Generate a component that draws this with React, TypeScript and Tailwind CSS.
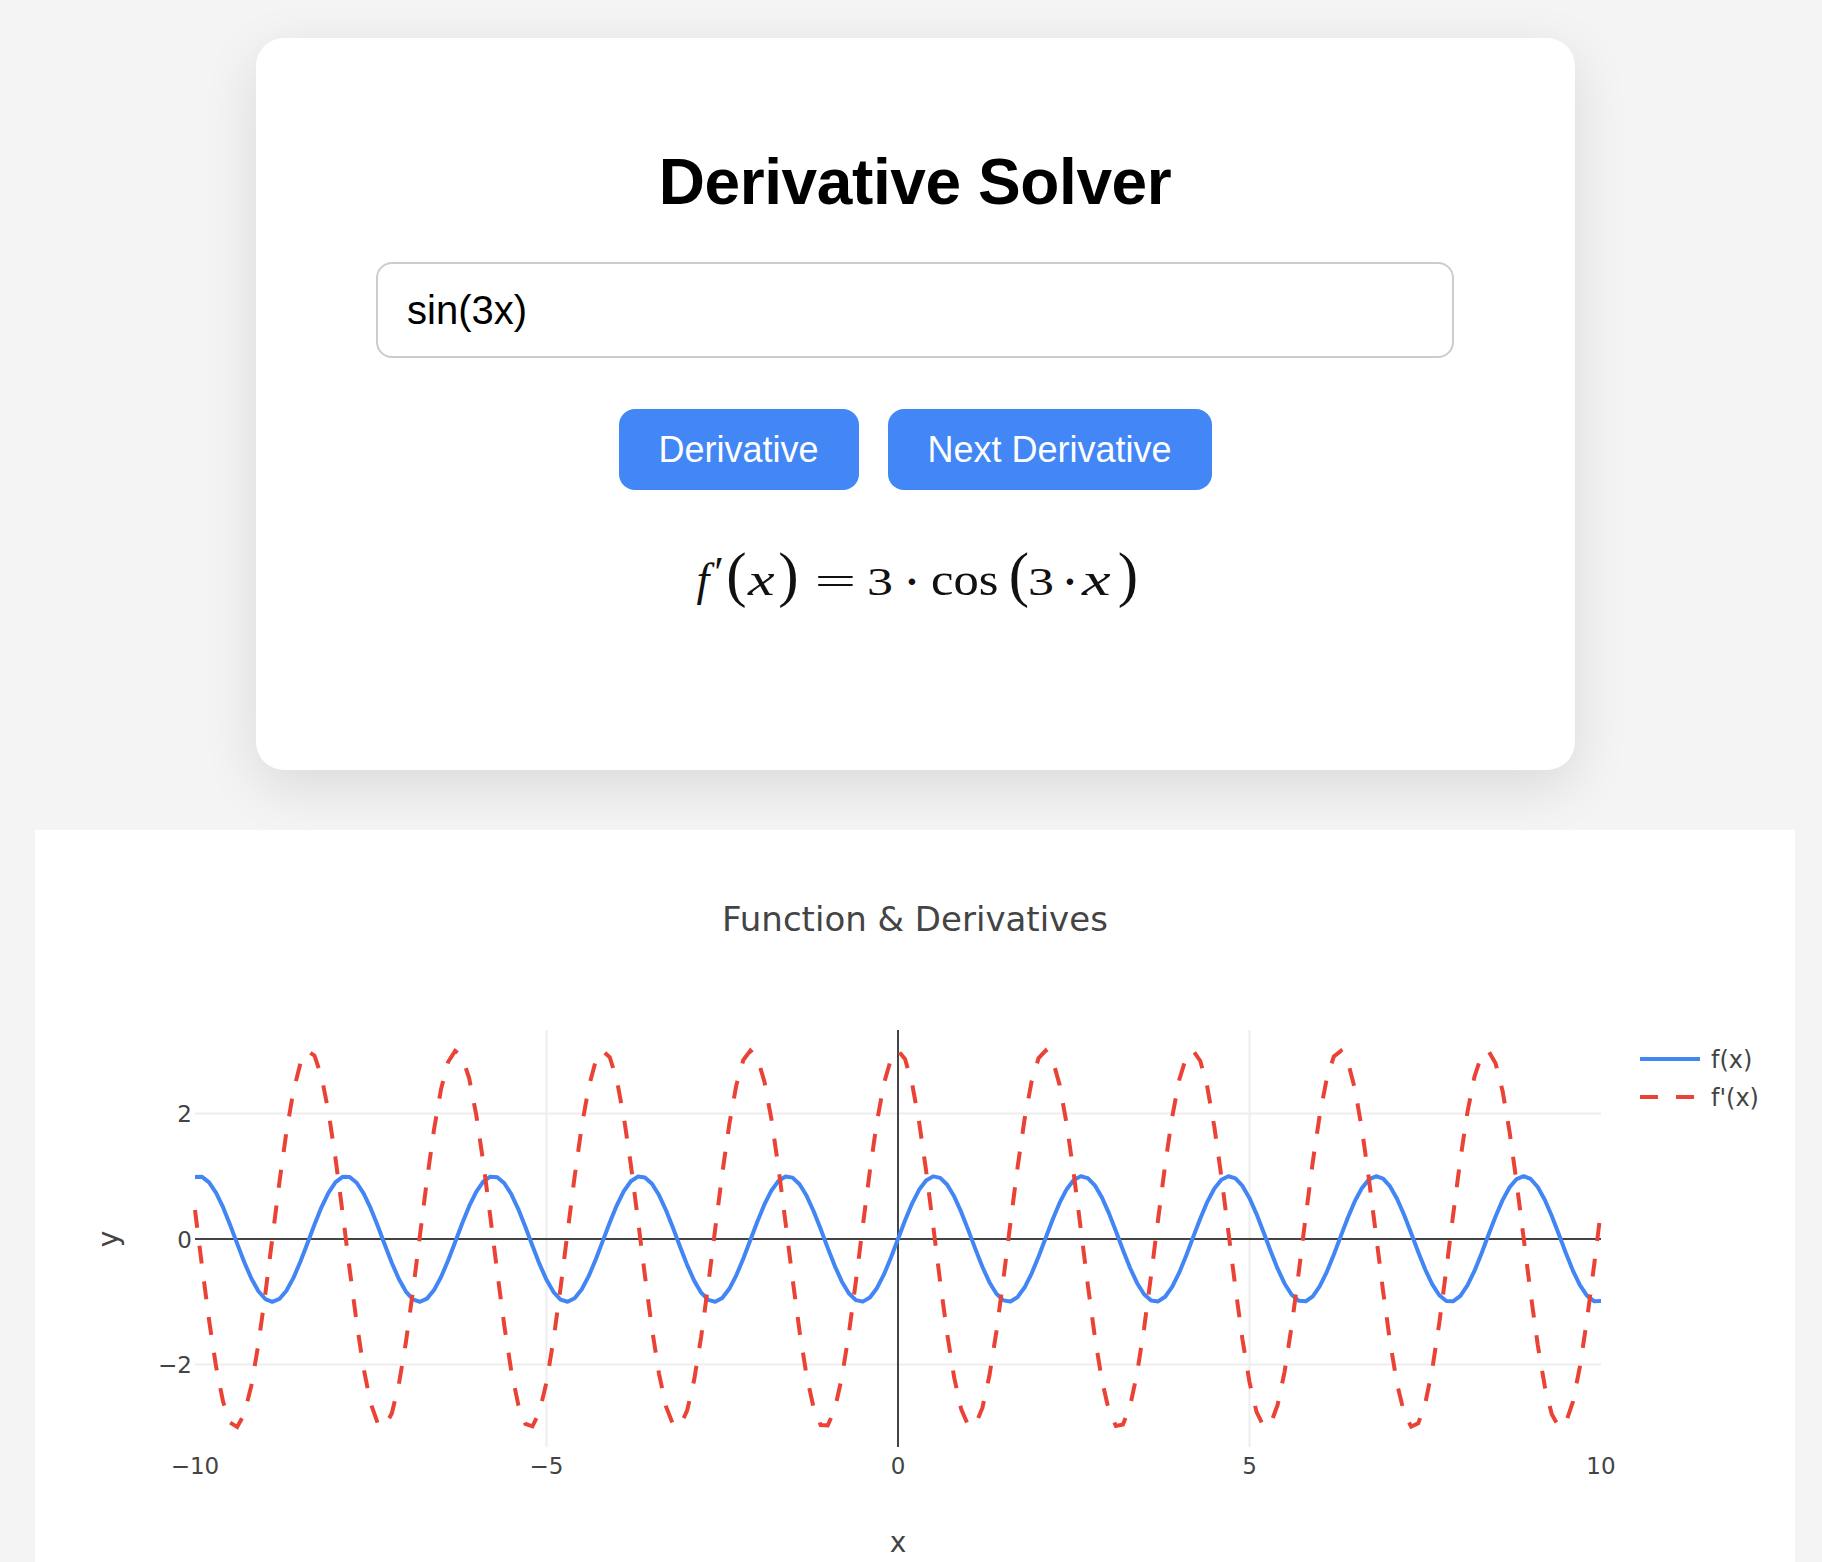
import { useMemo, useState } from "react";

const BLUE = "#4285f4";
const RED = "#ea4335";

// plot area, in px inside the chart box
const X0 = 160;
const X1 = 1566;
const TOP = 200;
const BOTTOM = 617;
const sx = (x: number) => 863 + x * 70.3;
const sy = (y: number) => 409 - y * 62.8;

const buildPath = (fn: (x: number) => number) => {
    const pts: string[] = [];
    for (let i = 0; i <= 200; i++) {
        const x = -10 + i * 0.1;
        pts.push(`${i === 0 ? "M" : "L"}${sx(x).toFixed(2)},${sy(fn(x)).toFixed(2)}`);
    }
    return pts.join(" ");
};

const Chart = () => {
    const fPath = useMemo(() => buildPath((x) => Math.sin(3 * x)), []);
    const dPath = useMemo(() => buildPath((x) => 3 * Math.cos(3 * x)), []);

    const font = "font-['DejaVu_Sans',Verdana,sans-serif] fill-[#444]";

    return (
        <svg width={1760} height={732} className="block">
            {/* grid */}
            <line x1={sx(-5)} x2={sx(-5)} y1={TOP} y2={BOTTOM} stroke="#eee" strokeWidth={2} />
            <line x1={sx(5)} x2={sx(5)} y1={TOP} y2={BOTTOM} stroke="#eee" strokeWidth={2} />
            <line x1={X0} x2={X1} y1={sy(2)} y2={sy(2)} stroke="#eee" strokeWidth={2} />
            <line x1={X0} x2={X1} y1={sy(-2)} y2={sy(-2)} stroke="#eee" strokeWidth={2} />
            {/* zero lines */}
            <line x1={sx(0)} x2={sx(0)} y1={TOP} y2={BOTTOM} stroke="#444" strokeWidth={2} />
            <line x1={X0} x2={X1} y1={sy(0)} y2={sy(0)} stroke="#444" strokeWidth={2} />

            <path d={fPath} fill="none" stroke={BLUE} strokeWidth={4} strokeLinejoin="round" />
            <path d={dPath} fill="none" stroke={RED} strokeWidth={4} strokeDasharray="18 18" />

            {/* title */}
            <text x={880} y={101} textAnchor="middle" className={`${font} text-[34px]`}>
                Function &amp; Derivatives
            </text>

            {/* x ticks */}
            {[-10, -5, 0, 5, 10].map((v) => (
                <text key={v} x={sx(v)} y={644} textAnchor="middle" className={`${font} text-[23px]`}>
                    {v < 0 ? `\u2212${-v}` : v}
                </text>
            ))}
            {/* y ticks */}
            {[2, 0, -2].map((v) => (
                <text key={v} x={157} y={sy(v) + 8.5} textAnchor="end" className={`${font} text-[23px]`}>
                    {v < 0 ? `\u2212${-v}` : v}
                </text>
            ))}

            {/* axis titles */}
            <text x={863} y={722} textAnchor="middle" className={`${font} text-[28px]`}>
                x
            </text>
            <text x={83} y={409} textAnchor="middle" transform="rotate(-90 83 409)" className={`${font} text-[28px]`}>
                y
            </text>

            {/* legend */}
            <line x1={1605} x2={1665} y1={229} y2={229} stroke={BLUE} strokeWidth={4} />
            <text x={1676} y={238} className={`${font} text-[24px]`}>
                f(x)
            </text>
            <line x1={1605} x2={1665} y1={267} y2={267} stroke={RED} strokeWidth={4} strokeDasharray="18 18" />
            <text x={1676} y={276} className={`${font} text-[24px]`}>
                f'(x)
            </text>
        </svg>
    );
};

// one glyph of the formula, centred in a fixed cell
const G = ({ w, ml, cls, children }: { w: string; ml: string; cls: string; children: string }) => (
    <span className={`flex justify-center ${w} ${ml}`}>
        <span className={`inline-block whitespace-nowrap ${cls}`}>{children}</span>
    </span>
);

const Formula = () => (
    <div className="mt-[55px] flex items-baseline font-['Liberation_Serif','DejaVu_Serif',serif] leading-[60px] text-[#111]">
        <G w="w-[23px]" ml="ml-0" cls="text-[46px] italic">f</G>
        <G w="w-[5px]" ml="ml-[2px]" cls="text-[44px] -translate-y-[8px]">′</G>
        <G w="w-[14px]" ml="ml-[8px]" cls="text-[61px]">(</G>
        <G w="w-[28px]" ml="ml-[4px]" cls="text-[46px] italic scale-x-[1.3]">x</G>
        <G w="w-[16px]" ml="ml-[5px]" cls="text-[61px]">)</G>
        <G w="w-[37px]" ml="ml-[20px]" cls="text-[40px] scale-x-[1.85]">=</G>
        <G w="w-[23px]" ml="ml-[15px]" cls="text-[40px] scale-x-[1.3]">3</G>
        <G w="w-[7px]" ml="ml-[17px]" cls="text-[40px] font-bold">·</G>
        <G w="w-[67px]" ml="ml-[16px]" cls="text-[46px] scale-x-[1.1]">cos</G>
        <G w="w-[15px]" ml="ml-[13px]" cls="text-[61px]">(</G>
        <G w="w-[23px]" ml="ml-[3px]" cls="text-[40px] scale-x-[1.3]">3</G>
        <G w="w-[7px]" ml="ml-[14px]" cls="text-[40px] font-bold">·</G>
        <G w="w-[31px]" ml="ml-[7px]" cls="text-[46px] italic scale-x-[1.4]">x</G>
        <G w="w-[21px]" ml="ml-[6px]" cls="text-[61px]">)</G>
    </div>
);

export default function App() {
    const [expr, setExpr] = useState("sin(3x)");

    return (
        <div className="h-[1562px] overflow-hidden bg-[#f4f4f4] pl-[35px] pt-[38px]">
            <div className="w-[1760px]">
                <div className="mx-auto flex h-[732px] w-[1319px] flex-col items-center rounded-[28px] bg-white pt-[107px] shadow-[0_16px_56px_rgba(0,0,0,0.11)]">
                    <h1 className="font-['Liberation_Sans',Arial,sans-serif] text-[64px] leading-[74px] font-bold tracking-[-0.4px] text-black">
                        Derivative Solver
                    </h1>

                    <input
                        value={expr}
                        onChange={(e) => setExpr(e.target.value)}
                        className="mt-[43px] h-[96px] w-[1078px] rounded-[16px] border-2 border-[#ccc] bg-white pl-[29px] font-['Liberation_Sans',Arial,sans-serif] text-[40px] text-black outline-none"
                    />

                    <div className="mt-[51px] flex gap-[29px]">
                        <button className="h-[81px] w-[240px] rounded-[16px] bg-[#4287f5] font-['Liberation_Sans',Arial,sans-serif] text-[36px] text-white">
                            Derivative
                        </button>
                        <button className="h-[81px] w-[324px] rounded-[16px] bg-[#4287f5] font-['Liberation_Sans',Arial,sans-serif] text-[36px] text-white">
                            Next Derivative
                        </button>
                    </div>

                    <Formula />
                </div>

                <div className="mt-[60px] h-[732px] w-[1760px] bg-white">
                    <Chart />
                </div>
            </div>
        </div>
    );
}
